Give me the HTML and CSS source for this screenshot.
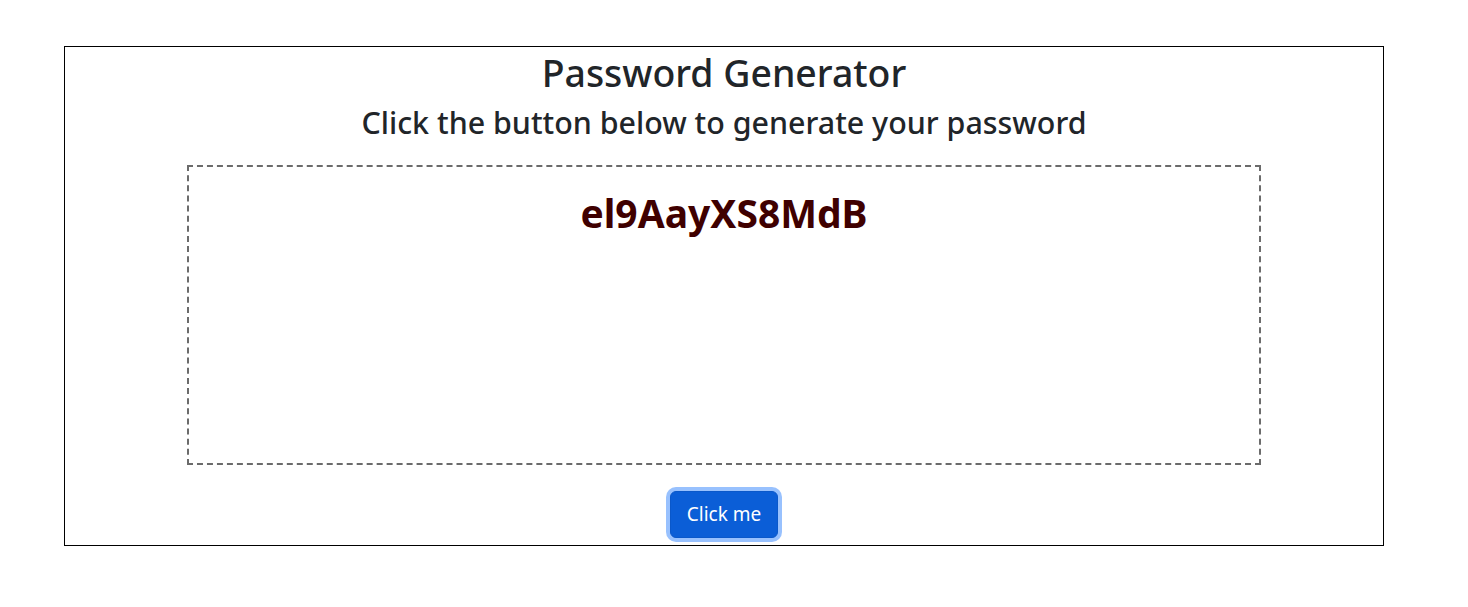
FILE: index.html
```html
<!DOCTYPE html>
<html lang="en">
<head>
<meta charset="utf-8">
<title>Password Generator</title>
<link rel="stylesheet" href="styles.css">
</head>
<body>
  <main class="panel">
    <h1 class="title">Password Generator</h1>
    <h2 class="subtitle">Click the button below to generate your password</h2>
    <section class="output">
      <p class="password">el9AayXS8MdB</p>
    </section>
    <div class="actions">
      <button class="btn" type="button">Click me</button>
    </div>
  </main>
</body>
</html>
```

FILE: styles.css
```css
* { box-sizing: border-box; }

html, body {
  margin: 0;
  padding: 0;
  background: #fff;
}

body {
  font-family: "Noto Sans", "Open Sans", sans-serif;
  color: #212529;
}

.panel {
  width: 1320px;
  height: 500px;
  margin: 46px 0 0 64px;
  border: 1px solid #000;
  text-align: center;
  display: flex;
  flex-direction: column;
  align-items: center;
}

.panel > * { flex-shrink: 0; }

.title {
  margin: 0;
  font-size: 37.4px;
  font-weight: 500;
  line-height: 48px;
  padding-top: 2px;
}

.subtitle {
  margin: 6px 0 0;
  font-size: 30.4px;
  font-weight: 500;
  line-height: 40px;
}

.output {
  width: 1074px;
  height: 300px;
  margin-top: 22px;
  border: 2px dashed #6b6b6b;
}

.password {
  margin: 22px 0 0;
  font-size: 39px;
  font-weight: 700;
  line-height: 48px;
  color: #3f0000;
}

.actions {
  margin-top: 26px;
}

.btn {
  font-family: inherit;
  font-size: 19px;
  line-height: 29px;
  padding: 8px 16px;
  height: 47px;
  white-space: nowrap;
  color: #fff;
  background: #0b5ed7;
  border: 1px solid #0a58ca;
  border-radius: 6px;
  box-shadow: 0 0 0 4px rgba(49, 132, 253, 0.5);
  cursor: pointer;
}
```
